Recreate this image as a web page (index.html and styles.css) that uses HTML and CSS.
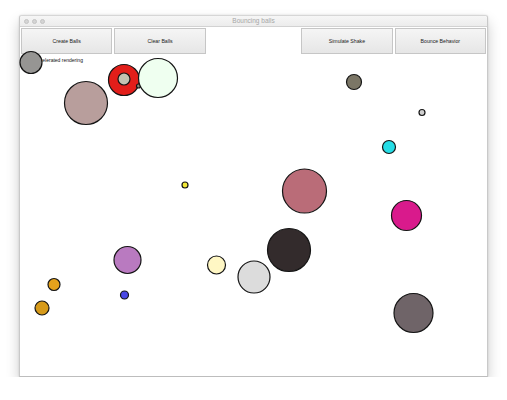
FILE: index.html
```html
<!DOCTYPE html>
<html>
<head>
<meta charset="utf-8">
<title>Bouncing balls</title>
<link rel="stylesheet" href="styles.css">
</head>
<body>
<div class="window">
  <div class="titlebar">
    <div class="lights"><span></span><span></span><span></span></div>
    <div class="title">Bouncing balls</div>
  </div>
  <div class="content">
    <div class="toolbar">
      <button class="btn">Create Balls</button>
      <button class="btn">Clear Balls</button>
      <div class="spacer"></div>
      <button class="btn">Simulate Shake</button>
      <button class="btn">Bounce Behavior</button>
    </div>
    <div class="canvas">
      <div class="accel">Accelerated rendering</div>
      <svg class="balls" viewBox="20 54 467 322" width="467" height="322">
        <g stroke="#151515" stroke-width="1.2">
          <circle cx="31" cy="62.5" r="11" fill="#969593"/>
          <circle cx="86" cy="103" r="21.5" fill="#b89e9c"/>
          <circle cx="124" cy="80" r="15.5" fill="#e21e1a"/>
          <circle cx="124" cy="79" r="6" fill="#c3c2b2"/>
          <circle cx="138.5" cy="86" r="2" fill="#8a8a7a"/>
          <circle cx="158" cy="78" r="19.5" fill="#effff0"/>
          <circle cx="354" cy="82" r="7.5" fill="#7b7666"/>
          <circle cx="422" cy="112.5" r="3" fill="#cfcfcf"/>
          <circle cx="389" cy="147" r="6.5" fill="#25dde6"/>
          <circle cx="185" cy="185" r="3" fill="#f2e836"/>
          <circle cx="304.5" cy="191" r="22" fill="#ba6c78"/>
          <circle cx="406.5" cy="215.5" r="15" fill="#d91a8c"/>
          <circle cx="289" cy="250" r="21.5" fill="#332b2c"/>
          <circle cx="127.5" cy="260" r="13.5" fill="#b97ac0"/>
          <circle cx="216.5" cy="265" r="9" fill="#fff7c4"/>
          <circle cx="254" cy="277" r="16" fill="#dcdcdc"/>
          <circle cx="54" cy="284.5" r="6" fill="#e5a21c"/>
          <circle cx="124.5" cy="295" r="4" fill="#4a48e4"/>
          <circle cx="42" cy="308" r="7" fill="#d69a1a"/>
          <circle cx="413.5" cy="313" r="19.5" fill="#6f6468"/>
        </g>
      </svg>
    </div>
  </div>
</div>
</body>
</html>
```
FILE: styles.css
```css
html, body {
  margin: 0;
  padding: 0;
  background: #ffffff;
}

body {
  font-family: "Liberation Sans", Arial, sans-serif;
}

.window {
  box-sizing: border-box;
  margin: 15px 0 0 19px;
  width: 469px;
  height: 362px;
  border: 1px solid #c9c9c9;
  border-top-color: #d6d6d6;
  border-bottom-color: #bdbdbd;
  border-radius: 3px 3px 0 0;
  background: #ffffff;
  box-shadow: 0 7px 14px rgba(0, 0, 0, 0.2), 0 0 2px rgba(0, 0, 0, 0.15);
  display: flex;
  flex-direction: column;
}

.titlebar {
  height: 10px;
  flex: none;
  background: linear-gradient(#f6f6f6, #ececec);
  border-bottom: 1px solid #d2d2d2;
  border-radius: 3px 3px 0 0;
  display: flex;
  align-items: center;
  position: relative;
}

.lights {
  display: flex;
  gap: 3px;
  padding-left: 4px;
}

.lights span {
  width: 5px;
  height: 5px;
  border-radius: 50%;
  background: #d4d4d4;
  border: 0.5px solid #c4c4c4;
  box-sizing: border-box;
}

.title {
  position: absolute;
  left: 0;
  right: 0;
  top: 0;
  bottom: 0;
  text-align: center;
  font-size: 6.5px;
  line-height: 10px;
  color: #a6a6a6;
}

.content {
  flex: 1;
  display: flex;
  flex-direction: column;
}

.toolbar {
  display: grid;
  grid-template-columns: repeat(5, 1fr);
  gap: 2px;
  padding: 1px 1px 0 1px;
}

.btn {
  height: 26px;
  margin: 0;
  padding: 0;
  border: 1px solid #c6c6c6;
  background: linear-gradient(#f5f5f5, #e6e6e6);
  font-family: "Liberation Sans", Arial, sans-serif;
  font-size: 5.2px;
  color: #1a1a1a;
}

.canvas {
  flex: 1;
  position: relative;
}

.accel {
  font-size: 5px;
  color: #111111;
  padding: 3px 0 0 14px;
}

.balls {
  position: absolute;
  left: 0;
  top: 0;
  display: block;
  overflow: visible;
}
```
